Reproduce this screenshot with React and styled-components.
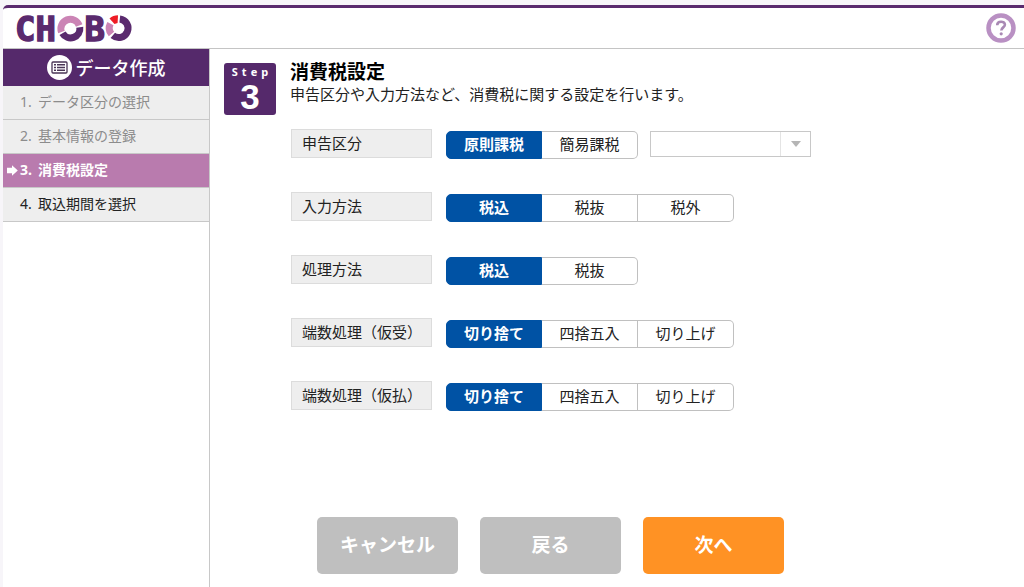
import { useState } from 'react';
import styled, { createGlobalStyle } from 'styled-components';

const GlobalStyle = createGlobalStyle`
  * {
    box-sizing: border-box;
  }

  body {
    margin: 0;
    background: #f7f5f9;
    color: #222;
    font-family: 'Noto Sans', 'Noto Sans CJK JP', sans-serif;
    font-size: 15px;
  }

  button, select {
    font-family: inherit;
  }
`;

const steps = [
  { no: '1.', label: 'データ区分の選択', state: 'done' },
  { no: '2.', label: '基本情報の登録', state: 'done' },
  { no: '3.', label: '消費税設定', state: 'current' },
  { no: '4.', label: '取込期間を選択', state: 'next' },
];

const settings = [
  { name: 'kubun', label: '申告区分', options: ['原則課税', '簡易課税'], hasSelect: true },
  { name: 'input', label: '入力方法', options: ['税込', '税抜', '税外'] },
  { name: 'process', label: '処理方法', options: ['税込', '税抜'] },
  { name: 'received', label: '端数処理（仮受）', options: ['切り捨て', '四捨五入', '切り上げ'] },
  { name: 'paid', label: '端数処理（仮払）', options: ['切り捨て', '四捨五入', '切り上げ'] },
];

const Logo = () => (
  <svg width="118" height="28" viewBox="0 0 118 28" overflow="visible" role="img" aria-label="CHOBO">
    <g
      fill="#5a2a6e"
      stroke="#5a2a6e"
      strokeWidth="1.4"
      fontFamily="'DejaVu Sans Mono', monospace"
      fontWeight="700"
      fontSize="34"
    >
      <text x="-1" y="26.5">C</text>
      <text x="19.5" y="26.5">H</text>
      <text x="68.5" y="26.5">B</text>
    </g>
    <g fill="none" strokeWidth="7">
      <path d="M45.5 18.1 A9.3 9.3 0 1 1 63.2 11.4" stroke="#cb84b5" />
      <path d="M63.8 13.3 A9.3 9.3 0 0 1 46.5 19.2" stroke="#5a2a6e" />
      <path d="M103.8 5 A9.3 9.3 0 1 1 96.8 21.4" stroke="#5a2a6e" />
      <path d="M95.5 20 A9.3 9.3 0 0 1 94.4 9.6" stroke="#cb84b5" />
    </g>
    <path d="M93.5 4.5 Q97 1.3 102 1.3 L101.6 9 L98.5 10 Z" fill="#ee1c25" />
  </svg>
);

const HelpIcon = () => (
  <svg width="30" height="30" viewBox="0 0 30 30" aria-hidden="true">
    <circle cx="15" cy="15" r="12.5" fill="#fff" stroke="#b990c3" strokeWidth="4.5" />
    <path d="M11.2 12.2 C11.2 7.5 18.9 7.7 18.9 11.7 C18.9 14.4 15.3 14.4 15.3 17.6" fill="none" stroke="#a989b4" strokeWidth="2.6" />
    <circle cx="15.2" cy="20.8" r="1.6" fill="#a989b4" />
  </svg>
);

const ListIcon = () => (
  <svg width="25" height="25" viewBox="0 0 25 25" aria-hidden="true">
    <circle cx="12.5" cy="12.5" r="12.5" fill="#fff" />
    <rect x="5" y="7" width="15" height="11" rx="1" fill="none" stroke="#4a3656" strokeWidth="1.3" />
    <path d="M7 9.8h2M7 12.5h2M7 15.2h2M10 9.8h8M10 12.5h8M10 15.2h8" stroke="#4a3656" strokeWidth="1.4" />
  </svg>
);

const ArrowIcon = () => (
  <svg width="11" height="11" viewBox="0 0 11 11" aria-hidden="true">
    <path d="M0 2.8h5V0.3L10.8 5.5L5 10.7V8.2H0z" fill="#fff" />
  </svg>
);

const App = () => {
  const [values, setValues] = useState(
    Object.fromEntries(settings.map((s) => [s.name, s.options[0]]))
  );

  return (
    <>
      <GlobalStyle />
      <Page>
        <Header>
          <Logo />
          <HelpButton type="button" aria-label="ヘルプ">
            <HelpIcon />
          </HelpButton>
        </Header>
        <Body>
          <Sidebar>
            <SidebarTitle>
              <ListIcon />
              <span>データ作成</span>
            </SidebarTitle>
            <StepList>
              {steps.map((step) => (
                <StepItem key={step.no} $state={step.state}>
                  <StepMark>{step.state === 'current' && <ArrowIcon />}</StepMark>
                  <StepNumber>{step.no}</StepNumber>
                  <span>{step.label}</span>
                </StepItem>
              ))}
            </StepList>
          </Sidebar>
          <Main>
            <Intro>
              <StepBadge>
                <BadgeText>Step</BadgeText>
                <BadgeNumber>3</BadgeNumber>
              </StepBadge>
              <div>
                <Title>消費税設定</Title>
                <Description>申告区分や入力方法など、消費税に関する設定を行います。</Description>
              </div>
            </Intro>
            <Form>
              {settings.map((s) => (
                <Row key={s.name} role="radiogroup" aria-labelledby={`${s.name}-label`}>
                  <RowLabel id={`${s.name}-label`}>{s.label}</RowLabel>
                  <Segments>
                    {s.options.map((option) => (
                      <Segment key={option}>
                        <input
                          type="radio"
                          name={s.name}
                          checked={values[s.name] === option}
                          onChange={() => setValues({ ...values, [s.name]: option })}
                        />
                        {option}
                      </Segment>
                    ))}
                  </Segments>
                  {s.hasSelect && (
                    <SelectBox>
                      <select aria-label="簡易課税の事業区分" disabled />
                      <SelectArrow>
                        <svg width="10" height="6" viewBox="0 0 10 6" aria-hidden="true">
                          <path d="M0 0h10L5 6z" fill="#b5b5b5" />
                        </svg>
                      </SelectArrow>
                    </SelectBox>
                  )}
                </Row>
              ))}
            </Form>
            <Actions>
              <ActionButton type="button">キャンセル</ActionButton>
              <ActionButton type="button">戻る</ActionButton>
              <ActionButton type="button" $primary>次へ</ActionButton>
            </Actions>
          </Main>
        </Body>
      </Page>
    </>
  );
};

const Page = styled.div`
  display: flex;
  flex-direction: column;
  min-height: calc(100vh - 5px);
  margin: 5px 0 0 3px;
  background: #fff;
  border-top: 3px solid #5a2a6e;
  border-top-left-radius: 5px;
`;

const Header = styled.header`
  display: flex;
  align-items: center;
  justify-content: space-between;
  height: 41px;
  padding: 0 8px 0 13px;
  border-bottom: 1px solid #c4c4c4;
`;

const HelpButton = styled.button`
  display: flex;
  padding: 0;
  border: 0;
  background: none;
  cursor: pointer;
`;

const Body = styled.div`
  display: flex;
  flex: 1;
`;

const Sidebar = styled.nav`
  flex: none;
  width: 207px;
  border-right: 1px solid #c8c8c8;
`;

const SidebarTitle = styled.h2`
  display: flex;
  align-items: center;
  justify-content: center;
  gap: 4px;
  height: 37px;
  margin: 0;
  background: #55296b;
  color: #fff;
  font-size: 18px;
  font-weight: 500;

  span {
    padding-bottom: 2px;
  }
`;

const StepList = styled.ol`
  margin: 0;
  padding: 0;
  list-style: none;
`;

const StepItem = styled.li`
  display: flex;
  height: 34px;
  border-bottom: 1px solid #c8c8c8;
  background: ${({ $state }) => ($state === 'current' ? '#b97bae' : '#eee')};
  color: ${({ $state }) => ({ done: '#8c8c8c', current: '#fff', next: '#222' })[$state]};
  font-size: 14px;
  font-weight: ${({ $state }) => ($state === 'current' ? 700 : 400)};
  line-height: 31px;
`;

const StepMark = styled.span`
  display: flex;
  align-items: center;
  width: 17px;
  padding-left: 4px;
`;

const StepNumber = styled.span`
  width: 18px;
`;

const Main = styled.main`
  flex: 1;
  padding: 14px 14px 13px;
`;

const Intro = styled.div`
  display: flex;
  gap: 14px;
  height: 52px;
`;

const StepBadge = styled.div`
  display: flex;
  flex-direction: column;
  align-items: center;
  width: 52px;
  border-radius: 3px;
  background: #55296b;
  color: #fff;
  font-weight: 700;
`;

const BadgeText = styled.span`
  padding-left: 4px;
  font-size: 11px;
  line-height: 17px;
  letter-spacing: 4px;
`;

const BadgeNumber = styled.span`
  font-family: 'Liberation Sans', sans-serif;
  font-size: 35px;
  line-height: 34px;
`;

const Title = styled.h1`
  margin: 0;
  color: #000;
  font-size: 19px;
  line-height: 19px;
`;

const Description = styled.p`
  margin: 0;
  line-height: 25px;
`;

const Form = styled.form`
  display: flex;
  flex-direction: column;
  gap: 33px;
  padding: 14px 0 0 67px;
`;

const Row = styled.div`
  display: flex;
  height: 30px;
`;

const RowLabel = styled.div`
  width: 141px;
  height: 29px;
  margin-right: 14px;
  padding-left: 10px;
  border: 1px solid #dcdcdc;
  background: #eee;
  line-height: 26px;
  white-space: nowrap;
`;

const Segments = styled.div`
  display: flex;
  align-self: flex-end;
`;

const Segment = styled.label`
  width: 96px;
  height: 28px;
  border: 1px solid #c0c0c0;
  border-left-width: 0;
  background: #fff;
  line-height: 24px;
  text-align: center;
  cursor: pointer;

  &:first-child {
    border-left-width: 1px;
    border-radius: 5px 0 0 5px;
  }

  &:last-child {
    border-radius: 0 5px 5px 0;
  }

  &:has(input:checked) {
    border-color: #0052a4;
    background: #0052a4;
    color: #fff;
    font-weight: 700;
  }

  input {
    position: absolute;
    width: 1px;
    height: 1px;
    margin: 0;
    opacity: 0;
  }
`;

const SelectBox = styled.div`
  display: flex;
  align-self: center;
  width: 161px;
  height: 26px;
  margin-left: 12px;
  border: 1px solid #c8c8c8;

  select {
    flex: 1;
    min-width: 0;
    border: 0;
    background: #fff;
    appearance: none;
  }
`;

const SelectArrow = styled.span`
  display: flex;
  align-items: center;
  justify-content: center;
  width: 30px;
  border-left: 1px solid #e4e4e4;
`;

const Actions = styled.div`
  display: flex;
  gap: 22px;
  padding: 106px 0 0 93px;
`;

const ActionButton = styled.button`
  width: 141px;
  height: 57px;
  padding: 0 0 4px;
  border: 0;
  border-radius: 5px;
  background: ${({ $primary }) => ($primary ? '#ff9224' : '#bfbfbf')};
  color: #fff;
  font-size: 19px;
  font-weight: 700;
  cursor: pointer;
`;

export default App;
